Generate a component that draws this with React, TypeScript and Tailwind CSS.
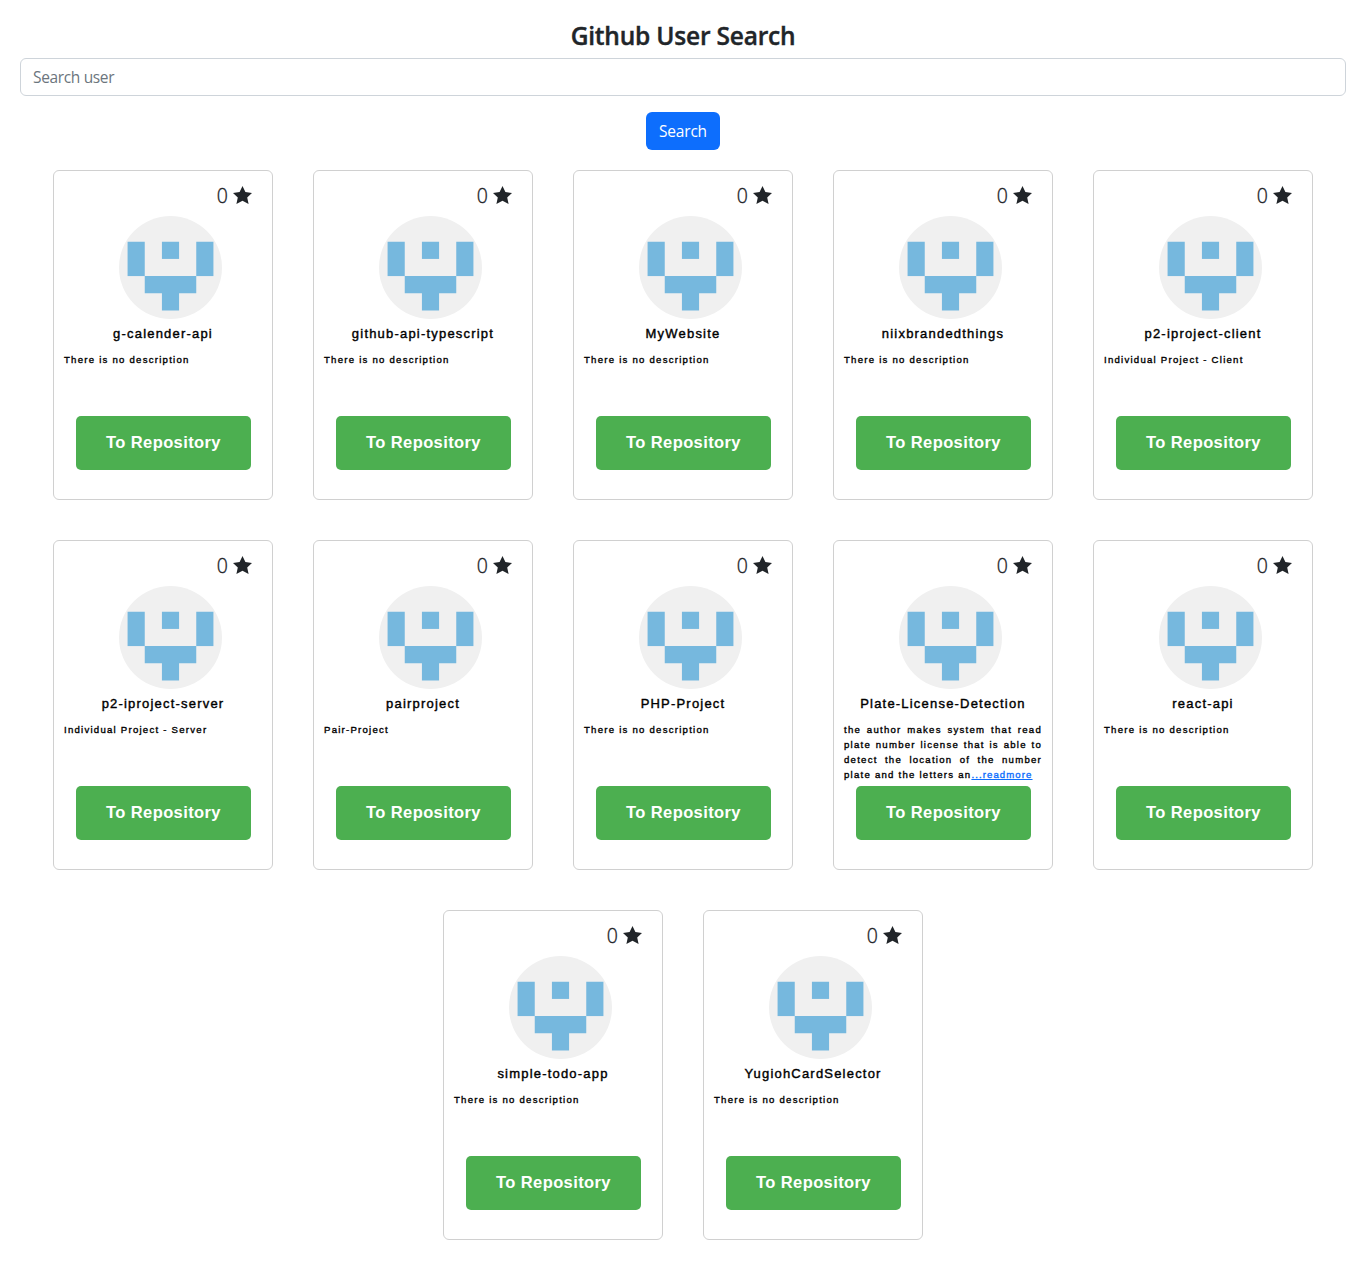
const repos: { name: string; description?: string; more?: boolean }[] = [
  { name: 'g-calender-api' },
  { name: 'github-api-typescript' },
  { name: 'MyWebsite' },
  { name: 'niixbrandedthings' },
  { name: 'p2-iproject-client', description: 'Individual Project - Client' },
  { name: 'p2-iproject-server', description: 'Individual Project - Server' },
  { name: 'pairproject', description: 'Pair-Project' },
  { name: 'PHP-Project' },
  {
    name: 'Plate-License-Detection',
    description:
      'the author makes system that read plate number license that is able to detect the location of the number plate and the letters an',
    more: true,
  },
  { name: 'react-api' },
  { name: 'simple-todo-app' },
  { name: 'YugiohCardSelector' },
];

function Avatar() {
  return (
    <svg className="ml-[65px] block size-[103px] rounded-full" viewBox="0 0 420 420">
      <rect width="420" height="420" fill="#f0f0f0" />
      <g fill="#76b8de">
        <rect x="35" y="105" width="70" height="140" />
        <rect x="175" y="105" width="70" height="70" />
        <rect x="315" y="105" width="70" height="140" />
        <path d="M105 245h210v70h-70v70h-70v-70h-70Z" />
      </g>
    </svg>
  );
}

function Star() {
  return (
    <svg className="mb-[2px] h-[18px] w-[19px]" viewBox="0 0 19 18" fill="#212529">
      <path d="M9.5 0 12.4 6.1 19 6.9 14.2 11.4 15.6 18 9.5 14.8 3.4 18 4.8 11.4 0 6.9 6.6 6.1Z" />
    </svg>
  );
}

function Card({ name, description, more }: (typeof repos)[number]) {
  return (
    <article className="h-[330px] w-[220px] rounded-[6px] border border-[#d0d0d0] bg-white">
      <div className="flex h-[45px] items-center justify-end gap-[5px] pt-[5px] pr-5">
        <span className="font-['Open_Sans',sans-serif] text-[19.5px] leading-[30px] font-light [-webkit-text-stroke:0.35px]">0</span>
        <Star />
      </div>
      <Avatar />
      <h2 className="mt-[5px] text-center text-[13px] leading-5 tracking-[1.2px] text-black [-webkit-text-stroke:0.4px]">
        {name}
      </h2>
      <p className="mt-2 h-[64px] px-2.5 text-justify text-[9.6px] leading-[15px] tracking-[1.24px] text-black [-webkit-text-stroke:0.35px]">
        {description ?? 'There is no description'}
        {more && (
          <a href="#" className="tracking-[1.1px] text-[#0d6efd] underline">
            ...readmore
          </a>
        )}
      </p>
      <button className="ml-[22px] h-[54px] w-[175px] rounded-[5px] bg-[#4caf50] pb-[2px] text-[16.5px] font-bold tracking-[0.4px] text-white">
        To Repository
      </button>
    </article>
  );
}

export default function App() {
  return (
    <main className="h-[1280px] bg-white px-5 pt-[21px] font-['Liberation_Sans',sans-serif] text-[#212529]">
      <h1 className="text-center font-['Open_Sans',sans-serif] text-[24.5px] leading-[30px] font-semibold tracking-[-0.2px] [-webkit-text-stroke:0.4px]">
        Github User Search
      </h1>
      <input
        className="mt-[7px] block h-[38px] w-full rounded-[6px] border border-[#ced4da] px-3 font-['Open_Sans',sans-serif] text-[15.5px] tracking-[-0.35px] placeholder:text-[#6c757d]"
        placeholder="Search user"
      />
      <button className="mx-auto mt-4 block h-[38px] w-[74px] rounded-[6px] bg-[#0d6efd] pt-[2px] font-['Open_Sans',sans-serif] text-[15.5px] tracking-[-0.2px] text-white">
        Search
      </button>
      <section className="mt-5 flex flex-wrap justify-center gap-10">
        {repos.map((repo) => (
          <Card key={repo.name} {...repo} />
        ))}
      </section>
    </main>
  );
}
